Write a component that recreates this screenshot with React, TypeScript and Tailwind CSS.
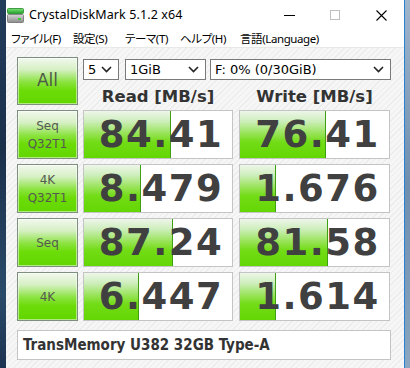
import React from "react";

const rows = [
  { label: ["Seq", "Q32T1"], r: "84.41", rw: 87, w: "76.41", ww: 86 },
  { label: ["4K", "Q32T1"], r: "8.479", rw: 57, w: "1.676", ww: 36 },
  { label: ["Seq"], r: "87.24", rw: 89, w: "81.58", ww: 88 },
  { label: ["4K"], r: "6.447", rw: 55, w: "1.614", ww: 36 },
];

const greenBtn =
  "border border-[#7f8f7f] bg-[linear-gradient(to_bottom,#f2f8ee_0%,#d6f0c4_25%,#8be340_52%,#6cdc08_70%,#62d600_100%)] shadow-[inset_0_0_0_1px_rgba(255,255,255,0.5)]";

function Chevron() {
  return (
    <svg width="11" height="7" viewBox="0 0 11 7" className="shrink-0">
      <path d="M1 1 L5.5 5.5 L10 1" fill="none" stroke="#222" strokeWidth="1.6" />
    </svg>
  );
}

function Combo({ w, text }: { w: string; text: string }) {
  return (
    <div
      className={`${w} h-[21px] bg-white border border-[#7a7a7a] flex items-center justify-between pl-[4px] pr-[6px] text-[13px] text-black font-['DejaVu_Sans',sans-serif] leading-none`}
    >
      <span>{text}</span>
      <Chevron />
    </div>
  );
}

function Value({ text, bar, w }: { text: string; bar: number; w: string }) {
  return (
    <div className={`${w} h-full relative bg-white border border-[#c4c4c4]`}>
      <div
        className="absolute left-0 top-0 bottom-0 bg-[linear-gradient(to_bottom,#eef6ea_0%,#cdeebb_22%,#97e356_48%,#72dc16_66%,#64d604_100%)] border-r border-[#3f9f12]"
        style={{ width: bar }}
      />
      <div className="relative h-full flex items-center justify-center pl-[6px] text-[37px] tracking-[1.5px] font-bold text-[#404040] font-['DejaVu_Sans',sans-serif] leading-none">
        {text}
      </div>
    </div>
  );
}

function DriveIcon() {
  return (
    <svg width="17" height="15" viewBox="0 0 17 15">
      <defs>
        <linearGradient id="gtop" x1="0" y1="0" x2="0" y2="1">
          <stop offset="0" stopColor="#7fe07a" />
          <stop offset="1" stopColor="#22a32a" />
        </linearGradient>
        <linearGradient id="gbody" x1="0" y1="0" x2="0" y2="1">
          <stop offset="0" stopColor="#d8d8d8" />
          <stop offset="1" stopColor="#8a8a8a" />
        </linearGradient>
      </defs>
      <rect x="0.5" y="0.5" width="16" height="5" rx="1" fill="url(#gtop)" stroke="#1e8a25" strokeWidth="0.8" />
      <rect x="0.5" y="6.5" width="16" height="8" rx="1" fill="url(#gbody)" stroke="#707070" strokeWidth="0.8" />
      <rect x="11" y="10" width="3" height="2" fill="#3ccf3c" />
    </svg>
  );
}

export default function App() {
  return (
    <div className="w-[410px] h-[368px] flex overflow-hidden bg-[#1d3452]">
      <div className="w-[6px] h-full bg-[linear-gradient(to_bottom,#233d5c,#1a2f4a_40%,#2a4a6a_80%,#1c3350)]" />
      <div className="w-[399px] h-full flex flex-col bg-white border-r border-[#2a80d2]">
        {/* title bar */}
        <div className="h-[30px] flex items-center bg-white shrink-0">
          <div className="ml-[1px] mt-[1px]">
            <DriveIcon />
          </div>
          <div className="ml-[5px] text-[12.5px] text-black font-['Noto_Sans',sans-serif] tracking-[0.1px]">
            CrystalDiskMark 5.1.2 x64
          </div>
          <div className="flex-1" />
          <div className="w-[46px] h-[30px] flex items-center justify-center">
            <div className="w-[11px] h-[1px] bg-black" />
          </div>
          <div className="w-[46px] h-[30px] flex items-center justify-center">
            <div className="w-[10px] h-[10px] border border-[#c0c0c0]" />
          </div>
          <div className="w-[46px] h-[30px] flex items-center justify-center">
            <svg width="11" height="11" viewBox="0 0 11 11">
              <path d="M0.5 0.5 L10.5 10.5 M10.5 0.5 L0.5 10.5" stroke="#000" strokeWidth="1.1" />
            </svg>
          </div>
        </div>
        {/* menu */}
        <div className="h-[17px] flex items-center bg-white text-[11.5px] tracking-[-0.4px] text-black font-['Noto_Sans','Noto_Sans_CJK_JP',sans-serif] [font-feature-settings:'palt'] leading-none shrink-0 pl-[5px] whitespace-nowrap">
          <span className="w-[62px] shrink-0">ファイル(F)</span>
          <span className="w-[52px] shrink-0">設定(S)</span>
          <span className="w-[55px] shrink-0">テーマ(T)</span>
          <span className="w-[60px] shrink-0">ヘルプ(H)</span>
          <span className="shrink-0">言語(Language)</span>
        </div>
        <div className="h-[1px] bg-[#e8e8e8] shrink-0" />
        {/* body */}
        <div className="flex-1 pl-[11px] pt-[9px] bg-[repeating-linear-gradient(135deg,#f6f6f6_0px,#f6f6f6_3px,#ececec_3px,#ececec_4px)]">
          {/* top area */}
          <div className="flex h-[48px]">
            <div
              className={`w-[61px] h-[48px] mr-[5px] flex items-center justify-center text-[17px] text-[#4d5a45] font-['DejaVu_Sans',sans-serif] ${greenBtn}`}
            >
              All
            </div>
            <div className="flex flex-col">
              <div className="flex mt-[2px]">
                <Combo w="w-[36px] mr-[6px]" text="5" />
                <Combo w="w-[81px] mr-[4px]" text="1GiB" />
                <Combo w="w-[181px]" text="F: 0% (0/30GiB)" />
              </div>
              <div className="flex h-[25px] text-[16.5px] font-bold text-[#333] font-['DejaVu_Sans',sans-serif] leading-[33px]">
                <div className="w-[150px] mr-[6px] text-center">Read [MB/s]</div>
                <div className="w-[151px] text-center">Write [MB/s]</div>
              </div>
            </div>
          </div>
          {/* rows */}
          <div className="flex flex-col gap-[5px] mt-[5px]">
            {rows.map((row, i) => (
              <div key={i} className="flex h-[49px]">
                <div
                  className={`w-[61px] h-full mr-[5px] flex flex-col items-center justify-center text-[12px] leading-[18px] text-[#555a50] font-['DejaVu_Sans',sans-serif] ${greenBtn}`}
                >
                  {row.label.map((l) => (
                    <span key={l}>{l}</span>
                  ))}
                </div>
                <Value w="w-[150px] mr-[6px]" text={row.r} bar={row.rw} />
                <Value w="w-[151px]" text={row.w} bar={row.ww} />
              </div>
            ))}
          </div>
          {/* name */}
          <div className="mt-[9px] w-[374px] h-[30px] bg-white border border-[#c4c4c4] flex items-center pl-[5px] text-[15px] font-bold text-[#333] font-['DejaVu_Sans_Condensed','DejaVu_Sans',sans-serif]">
            TransMemory U382 32GB Type-A
          </div>
        </div>
      </div>
      <div className="flex-1 h-full bg-[linear-gradient(to_bottom,#9fb6cc,#6f8fae_50%,#8aa6c0)]" />
    </div>
  );
}
